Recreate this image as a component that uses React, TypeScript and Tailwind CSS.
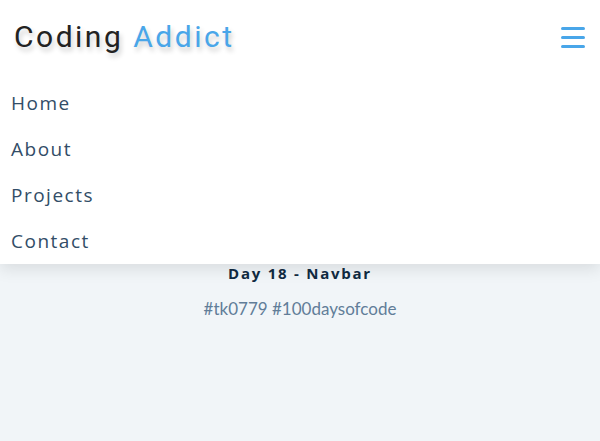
export default function App() {
  const links = ['Home', 'About', 'Projects', 'Contact'];
  return (
    <div className="min-h-[441px] bg-[#f1f5f8] font-['Open_Sans',sans-serif]">
      <nav className="bg-white shadow-[0_5px_15px_rgba(0,0,0,0.1)] relative z-10">
        <div className="flex h-[76px] items-center justify-between pl-[14px] pr-[15px]">
          <h1 className="mb-[4px] font-['Roboto',sans-serif] text-[30px] tracking-[2.5px] text-[#222] [text-shadow:2px_4px_5px_rgba(0,0,0,0.2)]">
            Coding <span className="text-[#49a6e9]">Addict</span>
          </h1>
          <button className="mb-[1px] flex flex-col gap-[6px]">
            <span className="block h-[3px] w-[24px] rounded-sm bg-[#49a6e9]" />
            <span className="block h-[3px] w-[24px] rounded-sm bg-[#49a6e9]" />
            <span className="block h-[3px] w-[24px] rounded-sm bg-[#49a6e9]" />
          </button>
        </div>
        <ul className="pt-[4px]">
          {links.map((l) => (
            <li key={l} className="flex h-[46px] items-center pl-[11px] text-[19px] tracking-[1.5px] text-[#324d67]">
              {l}
            </li>
          ))}
        </ul>
      </nav>
      <div className="flex flex-col items-center">
        <p className="mt-[-1px] text-[15px] font-bold tracking-[1.75px] text-[#102a42] leading-[20px]">Day 18 - Navbar</p>
        <p className="mt-[13px] font-['Lato',sans-serif] text-[17px] text-[#617d98]">#tk0779 #100daysofcode</p>
      </div>
    </div>
  );
}
